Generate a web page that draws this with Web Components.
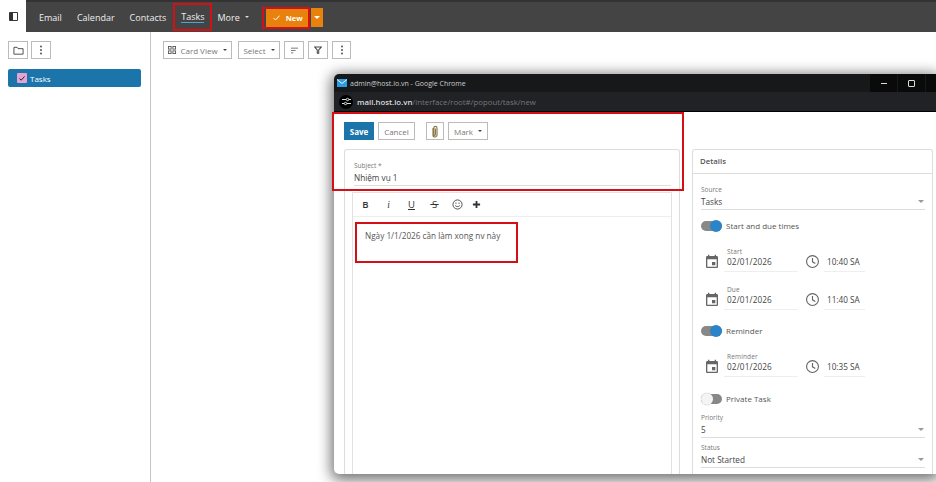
<!DOCTYPE html>
<html>
<head>
<meta charset="utf-8">
<title>Tasks</title>
<style>
  html, body { margin: 0; height: 100%; }
  body { width: 936px; height: 482px; overflow: hidden; position: relative; background: #fff; font-family: "Open Sans", "Liberation Sans", sans-serif; color: #333; }
  .page { display: flex; height: 450px; }
</style>
</head>
<body>
<mail-topbar>
  <nav-link>Email</nav-link>
  <nav-link>Calendar</nav-link>
  <nav-link>Contacts</nav-link>
  <nav-link active>Tasks</nav-link>
  <nav-link caret style="margin-left:-2px">More</nav-link>
</mail-topbar>
<div class="page">
  <mail-sidebar></mail-sidebar>
  <task-toolbar></task-toolbar>
</div>
<popup-window></popup-window>
<red-box style="left:173px;top:3px;width:39px;height:28px"></red-box>
<red-box style="left:262px;top:7px;width:48px;height:22px"></red-box>
<red-box style="left:332px;top:112px;width:352px;height:79px"></red-box>
<red-box style="left:355px;top:222px;width:163px;height:41px"></red-box>

<script>
const ICONS = {
  folder: '<svg width="11" height="11" viewBox="0 0 24 24" fill="none" stroke="#444" stroke-width="2"><path d="M2 5h7l2 3h11v12H2z"/></svg>',
  dots: '<svg width="12" height="12" viewBox="0 0 12 12" fill="#444"><circle cx="6" cy="2.5" r=".9"/><circle cx="6" cy="6" r=".9"/><circle cx="6" cy="9.5" r=".9"/></svg>',
  grid: '<svg width="8" height="8" viewBox="0 0 9 9" fill="none" stroke="#555"><rect x=".5" y=".5" width="3" height="3"/><rect x="5.5" y=".5" width="3" height="3"/><rect x=".5" y="5.5" width="3" height="3"/><rect x="5.5" y="5.5" width="3" height="3"/></svg>',
  sort: '<svg width="9" height="7" viewBox="0 0 11 9" stroke="#555"><path d="M1 1.5h9M1 4.5h6M1 7.5h3"/></svg>',
  filter: '<svg width="8" height="8" viewBox="0 0 11 11" fill="none" stroke="#444" stroke-width="1.4"><path d="M1 1.5h9L6.5 5.5V10h-2V5.5z"/></svg>',
  clip: '<svg width="8" height="13" viewBox="0 0 8 13" fill="none" stroke="#8a7a4a" stroke-width="1.2"><path d="M2 3v7a2 2 0 0 0 4 0V3a1.6 1.6 0 0 0-3.2 0v6.5a.8.8 0 0 0 1.6 0V3.5"/></svg>',
  event: '<svg width="16" height="16" viewBox="0 0 24 24" fill="#666"><path d="M17 12h-5v5h5v-5zM16 1v2H8V1H6v2H5c-1.11 0-1.99.9-1.99 2L3 19c0 1.1.89 2 2 2h14c1.1 0 2-.9 2-2V5c0-1.1-.9-2-2-2h-1V1h-2zm3 18H5V8h14v11z"/></svg>',
  clock: '<svg width="15" height="15" viewBox="0 0 24 24" fill="none" stroke="#666" stroke-width="1.8"><circle cx="12" cy="12" r="9.5"/><path d="M12 6.5V12.5l4.5 2.7"/></svg>',
  smile: '<svg width="11" height="11" viewBox="0 0 12 12" fill="none" stroke="#444"><circle cx="6" cy="6" r="5"/><path d="M3.5 7.2c1.2 1.4 3.8 1.4 5 0M3.5 4.5h1.5M7 4.5h1.5"/></svg>',
  plus: '<svg width="9" height="9" viewBox="0 0 10 10" stroke="#333" stroke-width="2"><path d="M5 1v8M1 5h8"/></svg>',
  mail: '<svg width="10" height="8" viewBox="0 0 10 8"><rect width="10" height="8" fill="#2f9be0"/><path d="M0 .5l5 4 5-4" fill="none" stroke="#fff" stroke-width=".9"/></svg>',
  tune: '<svg width="9" height="9" viewBox="0 0 9 9" stroke="#ddd" fill="none"><path d="M0 2.5h4M7 2.5h2M0 6.5h2M5 6.5h4"/><circle cx="5.5" cy="2.5" r="1.2"/><circle cx="3.5" cy="6.5" r="1.2"/></svg>'
};

// small helper so each class is just template + styles
function shadow(el, html) {
  el.attachShadow({ mode: 'open' }).innerHTML = html;
}

class MailTopbar extends HTMLElement {
  connectedCallback() {
    shadow(this, `
      <style>
        :host { display: flex; height: 30px; background: #444; border-top: 2px solid #333; color: #eee; font-size: 9px; }
        .tile { width: 26px; margin-top: -2px; background: #fff; display: flex; align-items: center; justify-content: center; }
        .tile i { width: 4px; height: 7px; border: 1.5px solid #333; border-left-width: 4px; border-radius: 1px; display: block; }
        nav { display: flex; margin-left: 13px; gap: 15px; align-items: center; }
        .new { display: flex; margin: 6px 0 0 17px; height: 19px; gap: 1px; color: #fff; font-size: 7.5px; font-weight: 700; }
        .new div { background: #e8820c; display: flex; align-items: center; justify-content: center; }
        .main { width: 44px; gap: 6px; }
        .drop { width: 12px; }
        .drop i { border: 3px solid transparent; border-top-color: #fff; border-bottom: 0; }
        svg { display: block; }
      </style>
      <div class="tile"><i></i></div>
      <nav><slot></slot></nav>
      <div class="new">
        <div class="main"><svg width="7" height="6" viewBox="0 0 7 6" fill="none" stroke="#fff"><path d="M.5 3l2 2L6.5.7"/></svg><span>New</span></div>
        <div class="drop"><i></i></div>
      </div>`);
  }
}

class NavLink extends HTMLElement {
  connectedCallback() {
    const active = this.hasAttribute('active');
    shadow(this, `
      <style>
        :host { display: inline-flex; align-items: center; gap: 5px; white-space: nowrap; }
        span { ${active ? 'border-bottom: 1px solid #4da3dc; line-height: 11px;' : ''} }
        i { border: 2.5px solid transparent; border-top-color: #ddd; border-bottom: 0; }
      </style>
      <span><slot></slot></span>${this.hasAttribute('caret') ? '<i></i>' : ''}`);
  }
}

class ToolBtn extends HTMLElement {
  connectedCallback() {
    const w = this.getAttribute('w');
    shadow(this, `
      <style>
        :host { display: inline-flex; align-items: center; justify-content: center; gap: 4px; box-sizing: border-box; height: 18px; width: ${w}px; border: 1px solid #bbb; background: #fff; color: #777; font-size: 8px; white-space: nowrap; }
        :host([primary]) { background: #1b75ab; border-color: #1b75ab; color: #fff; font-weight: 700; }
        i { border: 2.3px solid transparent; border-top-color: #444; border-bottom: 0; margin-left: 1px; }
        ::slotted(svg) { display: block; }
      </style>
      <slot></slot>${this.hasAttribute('caret') ? '<i></i>' : ''}`);
  }
}

class MailSidebar extends HTMLElement {
  connectedCallback() {
    shadow(this, `
      <style>
        :host { display: block; box-sizing: border-box; width: 151px; border-right: 1px solid #c4c4c4; padding: 9px 9px 0 8px; flex: none; }
        .btns { display: flex; gap: 3px; }
        .row { display: flex; align-items: center; gap: 3px; margin-top: 10px; height: 18px; padding-left: 9px; background: #1b75ab; border-radius: 2px; color: #fff; font-size: 8px; }
        .chk { width: 10px; height: 10px; background: #e3a3d3; border-radius: 1px; display: flex; align-items: center; justify-content: center; }
      </style>
      <div class="btns">
        <tool-btn w="20">${ICONS.folder}</tool-btn>
        <tool-btn w="20">${ICONS.dots}</tool-btn>
      </div>
      <div class="row">
        <span class="chk"><svg width="6" height="5" viewBox="0 0 6 5" fill="none" stroke="#222"><path d="M.5 2.5l1.7 1.7L5.5.5"/></svg></span>
        <span>Tasks</span>
      </div>`);
  }
}

class TaskToolbar extends HTMLElement {
  connectedCallback() {
    shadow(this, `
      <style>
        :host { display: flex; gap: 4px; padding: 9px 0 0 12px; align-items: flex-start; flex: 1; }
        .sel { margin-left: 2px; }
      </style>
      <tool-btn w="69" caret>${ICONS.grid}<span>Card View</span></tool-btn>
      <tool-btn class="sel" w="42" caret>Select</tool-btn>
      <tool-btn w="20">${ICONS.sort}</tool-btn>
      <tool-btn w="20">${ICONS.filter}</tool-btn>
      <tool-btn w="19">${ICONS.dots}</tool-btn>`);
  }
}

class FormField extends HTMLElement {
  connectedCallback() {
    const select = this.hasAttribute('select');
    shadow(this, `
      <style>
        :host { display: block; box-sizing: border-box; height: 25px; border-bottom: 1px solid #ddd; position: relative; }
        .l { font-size: 6.5px; line-height: 10px; height: 10px; color: #777; white-space: nowrap; }
        .v { font-size: 8.2px; line-height: 14px; height: 14px; margin-top: var(--v-shift, 0); color: #444; white-space: nowrap; }
        i { position: absolute; right: 1px; bottom: 6px; border: 3px solid transparent; border-top-color: #999; border-bottom: 0; }
      </style>
      <div class="l">${this.getAttribute('label')}</div>
      <div class="v"><slot></slot></div>
      ${select ? '<i></i>' : ''}`);
  }
}

class ToggleRow extends HTMLElement {
  connectedCallback() {
    const on = this.hasAttribute('on');
    shadow(this, `
      <style>
        :host { display: flex; align-items: center; height: 16px; gap: 4px; font-size: 8px; line-height: 14px; color: #555; white-space: nowrap; }
        .sw { width: 21px; height: 10px; border-radius: 5px; background: #888; position: relative; flex: none; }
        .sw b { position: absolute; top: -1px; ${on ? 'right: 0; background: #2c84c8;' : 'left: 0; background: #f4f4f4; box-shadow: 0 0 1px #999;'} width: 12px; height: 12px; border-radius: 50%; }
        span.t { margin-top: -1px; }
      </style>
      <span class="sw"><b></b></span><span class="t"><slot></slot></span>`);
  }
}

class DateRow extends HTMLElement {
  connectedCallback() {
    shadow(this, `
      <style>
        :host { display: flex; align-items: center; height: 25px; color: #444; --v-shift: -2px; }
        .ico { width: 23px; padding-left: 3px; box-sizing: border-box; flex: none; padding-top: 5px; }
        .ico2 { width: 19px; box-sizing: border-box; margin-left: 7px; flex: none; padding-top: 3px; }
        .d { width: 74px; box-sizing: border-box; padding-left: 3px; letter-spacing: .15px; }
        .t { width: 41px; box-sizing: border-box; padding-left: 3px; }
        form-field { border-bottom-color: #eee; }
        svg { display: block; }
      </style>
      <div class="ico">${ICONS.event}</div>
      <form-field class="d" label="${this.getAttribute('label')}">${this.getAttribute('date')}</form-field>
      <div class="ico2">${ICONS.clock}</div>
      <form-field class="t" label="&nbsp;">${this.getAttribute('time')}</form-field>`);
  }
}

class PopupWindow extends HTMLElement {
  connectedCallback() {
    shadow(this, `
      <style>
        :host { position: absolute; left: 334px; top: 74px; width: 602px; height: 400px; display: flex; flex-direction: column; background: #fff; border-radius: 5px 0 0 5px; box-shadow: 0 3px 14px 3px rgba(0,0,0,.55); }
        .title { height: 18px; flex: none; background: #16181a; color: #ccc; font-size: 7px; display: flex; align-items: center; padding-left: 3px; gap: 3px; border-radius: 5px 0 0 0; }
        .ctl { margin-left: auto; display: flex; height: 18px; }
        .ctl div { width: 27px; background: #0a0a0a; margin-left: 1px; display: flex; align-items: center; justify-content: center; }
        .ctl div:last-child { width: 10px; }
        .min { width: 6px; height: 1px; background: #ddd; }
        .max { width: 5px; height: 5px; border: 1px solid #ddd; border-radius: 1px; }
        .addr { height: 20px; flex: none; background: #202226; border-bottom: 1px solid #000; display: flex; align-items: center; padding-left: 5px; gap: 4px; font-size: 7.8px; color: #777; box-sizing: border-box; }
        .addr b { color: #ddd; font-weight: 600; }
        .tune { width: 14px; height: 14px; border-radius: 50%; background: #000; display: flex; align-items: center; justify-content: center; }
        .bar { display: flex; flex: none; height: 18px; margin: 10px 0 9px 10px; gap: 4px; }
        .clip { margin-left: 7px; }
        .cols { flex: 1; display: flex; gap: 12px; margin-left: 10px; min-height: 0; }
        .panel { box-sizing: border-box; border: 1px solid #ddd; border-bottom: 0; border-radius: 3px 3px 0 0; }
        .left { width: 336px; padding: 11px 8px 0 9px; display: flex; flex-direction: column; }
        .editor { flex: 1; margin: 6px 0 0 -2px; border: 1px solid #e2e2e2; border-bottom: 0; width: 320px; box-sizing: border-box; }
        .tools { height: 24px; box-sizing: border-box; border-bottom: 1px solid #eee; display: flex; align-items: center; padding-left: 1px; font-size: 9.5px; color: #333; }
        .tools span { width: 23px; display: flex; justify-content: center; }
        .tools svg { display: block; }
        .tools b { font-weight: 600; }
        .tools .plus { margin-left: -4px; }
        .text { padding: 13px 0 0 12px; font-size: 8.2px; color: #555; white-space: nowrap; }
        .right { width: 241px; }
        .rh { height: 24px; box-sizing: border-box; border-bottom: 1px solid #ddd; padding-left: 7px; font-size: 7.8px; line-height: 23px; font-weight: 600; color: #555; }
        .rb { padding: 11px 7px 0 8px; }
        svg { display: block; }
      </style>
      <div class="title">${ICONS.mail}<span>admin@host.io.vn - Google Chrome</span>
        <div class="ctl"><div><i class="min"></i></div><div><i class="max"></i></div><div></div></div>
      </div>
      <div class="addr"><span class="tune">${ICONS.tune}</span><span><b>mail.host.io.vn</b>/interface/root#/popout/task/new</span></div>
      <div class="bar">
        <tool-btn w="30" primary>Save</tool-btn>
        <tool-btn w="37">Cancel</tool-btn>
        <tool-btn class="clip" w="18">${ICONS.clip}</tool-btn>
        <tool-btn w="40" caret>Mark</tool-btn>
      </div>
      <div class="cols">
        <div class="panel left">
          <form-field label="Subject *">Nhiệm vụ 1</form-field>
          <div class="editor">
            <div class="tools">
              <span><b>B</b></span><span><i style="font-family:'Liberation Serif',serif">i</i></span><span><u>U</u></span><span><s>&thinsp;S&thinsp;</s></span><span>${ICONS.smile}</span><span class="plus">${ICONS.plus}</span>
            </div>
            <div class="text">Ngày 1/1/2026 cần làm xong nv này</div>
          </div>
        </div>
        <div class="panel right">
          <div class="rh">Details</div>
          <div class="rb">
            <form-field select label="Source">Tasks</form-field>
            <toggle-row on style="margin-top:8px">Start and due times</toggle-row>
            <date-row style="margin-top:13px" label="Start" date="02/01/2026" time="10:40 SA"></date-row>
            <date-row style="margin-top:13px" label="Due" date="02/01/2026" time="11:40 SA"></date-row>
            <toggle-row on style="margin-top:13px">Reminder</toggle-row>
            <date-row style="margin-top:13px" label="Reminder" date="02/01/2026" time="10:35 SA"></date-row>
            <toggle-row style="margin-top:14px">Private Task</toggle-row>
            <form-field select style="margin-top:6px" label="Priority">5</form-field>
            <form-field select style="margin-top:5px" label="Status">Not Started</form-field>
          </div>
        </div>
      </div>`);
  }
}

class RedBox extends HTMLElement {
  connectedCallback() {
    shadow(this, `<style>:host { position: absolute; box-sizing: border-box; border: 2px solid #d40f16; pointer-events: none; }</style>`);
  }
}

customElements.define('nav-link', NavLink);
customElements.define('tool-btn', ToolBtn);
customElements.define('form-field', FormField);
customElements.define('toggle-row', ToggleRow);
customElements.define('date-row', DateRow);
customElements.define('mail-topbar', MailTopbar);
customElements.define('mail-sidebar', MailSidebar);
customElements.define('task-toolbar', TaskToolbar);
customElements.define('popup-window', PopupWindow);
customElements.define('red-box', RedBox);
</script>
</body>
</html>
